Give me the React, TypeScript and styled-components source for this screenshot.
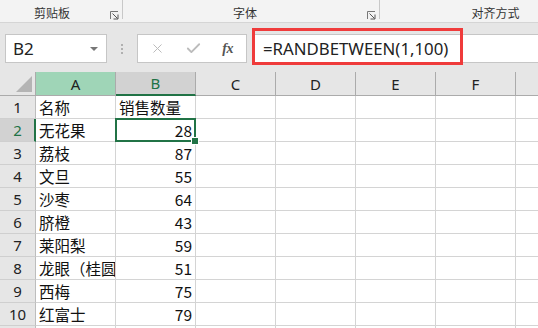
import React from 'react';
import styled, { createGlobalStyle, css } from 'styled-components';
import { X, Check } from 'lucide-react';

const GREEN = '#217346';
const GRID = '#d4d4d4';
const HEAD_LINE = '#ababab';
const CJK = `"Noto Sans CJK SC", "Noto Sans", sans-serif`;
const UI = `"Noto Sans", "Noto Sans CJK SC", sans-serif`;

const GlobalStyle = createGlobalStyle`
  html, body {
    margin: 0;
    padding: 0;
    background: #ffffff;
    overflow: hidden;
  }
  * {
    box-sizing: border-box;
  }
`;

const rows: { name: string; value: string }[] = [
  { name: '名称', value: '销售数量' },
  { name: '无花果', value: '28' },
  { name: '荔枝', value: '87' },
  { name: '文旦', value: '55' },
  { name: '沙枣', value: '64' },
  { name: '脐橙', value: '43' },
  { name: '莱阳梨', value: '59' },
  { name: '龙眼（桂圆）', value: '51' },
  { name: '西梅', value: '75' },
  { name: '红富士', value: '79' },
  { name: '', value: '' },
];

const columns = ['A', 'B', 'C', 'D', 'E', 'F', 'G'];

const Launcher = () => (
  <LauncherIcon width="9" height="9" viewBox="0 0 9 9">
    <path d="M0.5 8 V0.5 H8" fill="none" stroke="#777" strokeWidth="1" />
    <path d="M2.5 2.5 L7.5 7.5" fill="none" stroke="#555" strokeWidth="1" />
    <path d="M3.5 8 H8 V3.5" fill="none" stroke="#555" strokeWidth="1" />
  </LauncherIcon>
);

export default function App() {
  return (
    <>
      <GlobalStyle />
      <Page>
        <Ribbon>
          <RibbonGroup $width={123}>
            <GroupLabel $shift={-3}>剪贴板</GroupLabel>
            <Launcher />
          </RibbonGroup>
          <RibbonGroup $width={257}>
            <GroupLabel $shift={0}>字体</GroupLabel>
            <Launcher />
          </RibbonGroup>
          <RibbonGroup $width={234} $last>
            <GroupLabel $shift={0}>对齐方式</GroupLabel>
          </RibbonGroup>
        </Ribbon>

        <FormulaRow>
          <NameBox>
            <NameText>B2</NameText>
            <DropArrow />
          </NameBox>
          <Grip>
            <span />
            <span />
            <span />
          </Grip>
          <ButtonBox>
            <X size={15} color="#bcbcbc" strokeWidth={1.6} />
            <Check size={17} color="#bcbcbc" strokeWidth={2.6} />
            <Fx>fx</Fx>
          </ButtonBox>
          <FormulaInput>
            <FormulaText>=RANDBETWEEN(1,100)</FormulaText>
            <Highlight />
          </FormulaInput>
        </FormulaRow>

        <Sheet>
          <Corner />
          {columns.map(c => (
            <ColHead key={c} $state={c === 'A' ? 'marked' : c === 'B' ? 'active' : 'none'}>
              {c}
            </ColHead>
          ))}
          {rows.map((r, i) => (
            <React.Fragment key={i}>
              <RowHead $active={i === 1}>{i < 10 ? i + 1 : ''}</RowHead>
              <Cell $rowActive={i === 1}>{r.name}</Cell>
              <Cell $align={i === 0 ? 'left' : 'right'} $selected={i === 1}>
                {r.value}
              </Cell>
              {columns.slice(2).map(c => (
                <Cell key={c} />
              ))}
            </React.Fragment>
          ))}
        </Sheet>
      </Page>
    </>
  );
}

const Page = styled.div`
  width: 538px;
  height: 328px;
  overflow: hidden;
  display: flex;
  flex-direction: column;
  background: #e6e6e6;
`;

const Ribbon = styled.div`
  display: flex;
  height: 23px;
  flex: none;
  background: #f3f3f3;
  border-bottom: 1px solid #d5d5d5;
`;

const RibbonGroup = styled.div<{ $width: number; $last?: boolean }>`
  flex: none;
  width: ${p => p.$width}px;
  display: flex;
  align-items: flex-start;
  padding-right: 3px;
  border-right: ${p => (p.$last ? 'none' : '1px solid #c8c8c8')};
  height: 19px;
`;

const GroupLabel = styled.div<{ $shift: number }>`
  flex: 1;
  text-align: center;
  font-family: ${CJK};
  font-size: 12px;
  line-height: 12px;
  padding-top: 7px;
  color: #333;
  transform: translateX(${p => p.$shift}px);
`;

const LauncherIcon = styled.svg`
  flex: none;
  margin-top: 11px;
`;

const FormulaRow = styled.div`
  flex: none;
  height: 49px;
  display: flex;
  align-items: flex-start;
  padding: 11px 0 0 5px;
`;

const NameBox = styled.div`
  width: 102px;
  height: 29px;
  background: #fff;
  border: 1px solid #c6c6c6;
  display: flex;
  align-items: center;
  justify-content: space-between;
  padding: 0 8px 0 7px;
`;

const NameText = styled.span`
  font-family: ${UI};
  font-size: 17px;
  color: #222;
`;

const DropArrow = styled.span`
  width: 0;
  height: 0;
  border-left: 4px solid transparent;
  border-right: 4px solid transparent;
  border-top: 4px solid #777;
`;

const Grip = styled.div`
  width: 30px;
  height: 29px;
  display: flex;
  flex-direction: column;
  align-items: center;
  justify-content: center;
  gap: 2px;
  padding-right: 1px;

  span {
    width: 2px;
    height: 2px;
    background: #b0b0b0;
  }
`;

const ButtonBox = styled.div`
  width: 110px;
  height: 29px;
  background: #fff;
  border: 1px solid #c6c6c6;
  display: flex;
  align-items: center;
  justify-content: space-between;
  padding: 0 13px 0 12px;
`;

const Fx = styled.span`
  font-family: 'Liberation Serif', serif;
  font-style: italic;
  font-weight: bold;
  font-size: 14px;
  color: #555;
  letter-spacing: -0.5px;
`;

const FormulaInput = styled.div`
  position: relative;
  flex: 1;
  margin-left: 5px;
  height: 29px;
  background: #fff;
  border: 1px solid #c6c6c6;
  border-right: none;
  display: flex;
  align-items: center;
  padding-left: 10px;
`;

const FormulaText = styled.span`
  font-family: ${UI};
  font-size: 16.8px;
  color: #222;
  white-space: nowrap;
`;

const Highlight = styled.div`
  position: absolute;
  left: -1px;
  top: -7px;
  width: 211px;
  height: 37px;
  border: 3px solid #ef3b3b;
`;

const Sheet = styled.div`
  flex: none;
  display: grid;
  grid-template-columns: 36px repeat(7, 80px);
  grid-template-rows: 24px;
  grid-auto-rows: 23px;
  background: #fff;
`;

const headText = css`
  display: flex;
  align-items: center;
  justify-content: center;
  font-family: ${UI};
  font-size: 15px;
  color: #222;
`;

const Corner = styled.div`
  position: relative;
  background: #e6e6e6;
  border-right: 1px solid ${HEAD_LINE};
  border-bottom: 1px solid ${HEAD_LINE};

  &::after {
    content: '';
    position: absolute;
    right: 3px;
    bottom: 3px;
    width: 0;
    height: 0;
    border-left: 16px solid transparent;
    border-bottom: 16px solid #b4b4b4;
  }
`;

const ColHead = styled.div<{ $state: 'none' | 'marked' | 'active' }>`
  ${headText};
  background: ${p => (p.$state === 'marked' ? '#9fd5b7' : p.$state === 'active' ? '#d2d2d2' : '#e6e6e6')};
  color: ${p => (p.$state === 'active' ? GREEN : '#222')};
  border-right: 1px solid ${HEAD_LINE};
  border-bottom: ${p => (p.$state === 'active' ? `2px solid ${GREEN}` : `1px solid ${HEAD_LINE}`)};
`;

const RowHead = styled.div<{ $active?: boolean }>`
  ${headText};
  background: ${p => (p.$active ? '#d2d2d2' : '#e6e6e6')};
  color: ${p => (p.$active ? GREEN : '#222')};
  border-right: ${p => (p.$active ? `2px solid ${GREEN}` : '1px solid #bdbdbd')};
  border-bottom: 1px solid #cfcfcf;
  padding-left: ${p => (p.$active ? '1px' : '0')};
`;

const Cell = styled.div<{ $align?: 'left' | 'right'; $selected?: boolean; $rowActive?: boolean }>`
  position: relative;
  border-right: 1px solid ${GRID};
  border-bottom: 1px solid ${GRID};
  display: flex;
  align-items: center;
  justify-content: ${p => (p.$align === 'right' ? 'flex-end' : 'flex-start')};
  padding: 0 3px 1px 3px;
  overflow: hidden;
  white-space: nowrap;
  font-family: ${CJK};
  font-size: 15.5px;
  color: #111;

  ${p =>
    p.$selected &&
    css`
      overflow: visible;
      &::before {
        content: '';
        position: absolute;
        left: -1px;
        top: -1px;
        right: -1px;
        bottom: -1px;
        border: 2px solid ${GREEN};
      }
      &::after {
        content: '';
        position: absolute;
        right: -4px;
        bottom: -4px;
        width: 6px;
        height: 6px;
        background: ${GREEN};
        border: 1px solid #fff;
        z-index: 1;
      }
    `}
`;
